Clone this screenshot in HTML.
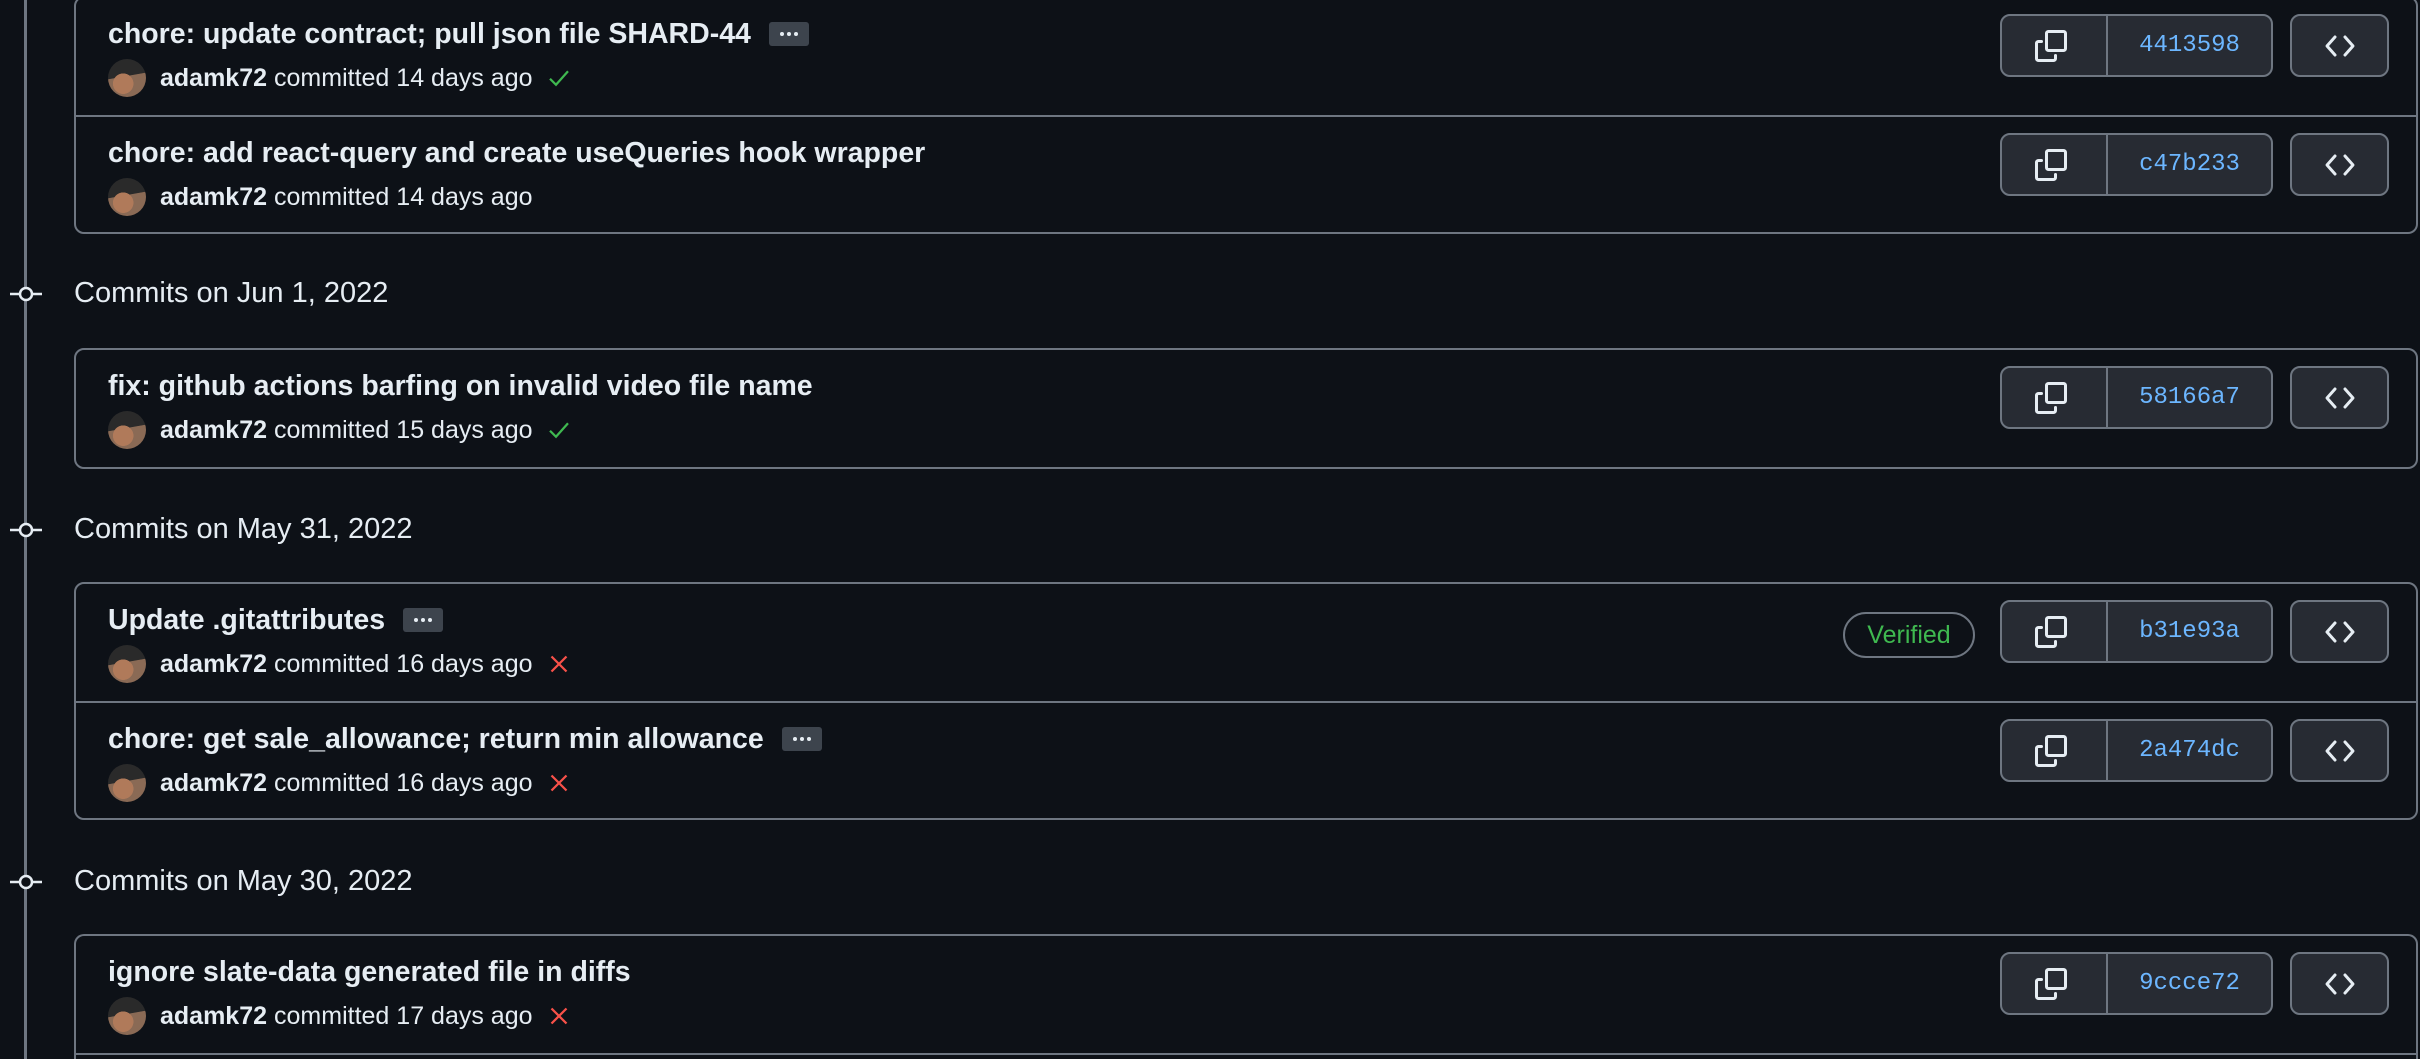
<!DOCTYPE html>
<html><head><meta charset="utf-8"><style>
*{box-sizing:border-box;margin:0;padding:0}
html,body{width:2420px;height:1059px;overflow:hidden}
body{background:#0d1117;position:relative;font-family:"Liberation Sans",Arial,sans-serif;color:#e6edf3}
.tl{position:absolute;left:24px;top:0;width:3px;height:1059px;background:#6e7681}
.date{position:absolute;left:0;height:40px;width:700px}
.date svg{position:absolute;left:8px;top:8px}
.date span{position:absolute;left:74px;top:3px;font-size:29px;color:#e6edf3}
.box{position:absolute;left:74px;width:2344px;border:2px solid #6e7681;border-radius:10px;background:#0d1117}
.row{position:relative;height:117px;border-top:2px solid #6e7681}
.row:first-child{border-top:none}
.title{position:absolute;left:32px;top:19px;font-size:28.5px;font-weight:bold;white-space:nowrap;display:flex;align-items:center;height:34px}
.ell{display:inline-flex;align-items:center;justify-content:center;width:40px;height:24px;background:#3d444d;border-radius:3px;margin-left:18px}
.ell i{display:block;width:4px;height:4px;border-radius:50%;background:#e6edf3;margin:0 1.5px}
.meta{position:absolute;left:32px;top:61px;font-size:25px;display:flex;align-items:center;white-space:nowrap;height:38px}
.av{width:38px;height:38px;border-radius:50%;margin-right:14px;background:radial-gradient(circle at 40% 65%,#b07a5a 0 30%,transparent 31%),linear-gradient(170deg,#2a2a2a 0 45%,#8a6a55 46% 100%)}
.meta b{margin-right:7px}
.st{margin-left:14px}
.grp{position:absolute;left:1924px;top:16px;width:273px;height:63px;border:2px solid #6e7681;border-radius:10px;background:#272b33;display:flex}
.grp .cp{width:106px;border-right:2px solid #6e7681;display:flex;align-items:center;justify-content:center;padding-right:6px}
.grp .sha{flex:1;display:flex;align-items:center;justify-content:center;font-family:"Liberation Mono",monospace;font-size:24px;color:#6cb6ff}
.code{position:absolute;left:2214px;top:16px;width:99px;height:63px;border:2px solid #6e7681;border-radius:10px;background:#272b33;display:flex;align-items:center;justify-content:center}
.ver{position:absolute;left:1767px;top:28px;width:132px;height:46px;border:2px solid #6e7681;border-radius:23px;color:#3fb950;font-size:25px;display:flex;align-items:center;justify-content:center}
</style></head><body>
<div class="tl"></div>

<svg width="0" height="0" style="position:absolute"><defs>
<symbol id="copy" viewBox="0 0 16 16"><path fill="#e6edf3" d="M0 6.75C0 5.784.784 5 1.750 5h1.5a.75.75 0 010 1.5h-1.5a.25.25 0 00-.25.25v7.5c0 .138.112.25.25.25h7.5a.25.25 0 00.25-.25v-1.5a.75.75 0 011.5 0v1.5A1.75 1.75 0 019.25 16h-7.5A1.75 1.75 0 010 14.25v-7.5z"/><path fill="#e6edf3" d="M5 1.75C5 .784 5.784 0 6.75 0h7.5C15.216 0 16 .784 16 1.75v7.5A1.75 1.75 0 0114.25 11h-7.5A1.75 1.75 0 015 9.25v-7.5zm1.75-.25a.25.25 0 00-.25.25v7.5c0 .138.112.25.25.25h7.5a.25.25 0 00.25-.25v-7.5a.25.25 0 00-.25-.25h-7.5z"/></symbol>
<symbol id="code" viewBox="0 0 16 16"><path fill="none" stroke="#e6edf3" stroke-width="1.5" stroke-linecap="round" stroke-linejoin="round" d="M5.5 3.5L1.5 8l4 4.5M10.5 3.5l4 4.5-4 4.5"/></symbol>
</defs></svg>

<div class="box" style="top:-4px">
 <div class="row">
  <div class="title">chore: update contract; pull json file SHARD-44<span class="ell"><i></i><i></i><i></i></span></div>
  <div class="meta"><div class="av"></div><b>adamk72</b>committed 14 days ago<svg class="st" width="24" height="24" viewBox="0 0 16 16"><path d="M2 8.5l4 4 8-9" fill="none" stroke="#3fb950" stroke-width="1.5"/></svg></div>
  <div class="grp"><div class="cp"><svg width="32" height="32"><use href="#copy"/></svg></div><div class="sha">4413598</div></div>
  <div class="code"><svg width="32" height="32"><use href="#code"/></svg></div>
 </div>
 <div class="row">
  <div class="title">chore: add react-query and create useQueries hook wrapper</div>
  <div class="meta"><div class="av"></div><b>adamk72</b>committed 14 days ago</div>
  <div class="grp"><div class="cp"><svg width="32" height="32"><use href="#copy"/></svg></div><div class="sha">c47b233</div></div>
  <div class="code"><svg width="32" height="32"><use href="#code"/></svg></div>
 </div>
</div>

<div class="date" style="top:274px"><svg width="36" height="24" viewBox="0 0 36 24"><line x1="2" y1="12" x2="34" y2="12" stroke="#e6edf3" stroke-width="2.5"/><circle cx="18" cy="12" r="6" fill="#0d1117" stroke="#e6edf3" stroke-width="2.5"/></svg><span>Commits on Jun 1, 2022</span></div>

<div class="box" style="top:348px">
 <div class="row">
  <div class="title">fix: github actions barfing on invalid video file name</div>
  <div class="meta"><div class="av"></div><b>adamk72</b>committed 15 days ago<svg class="st" width="24" height="24" viewBox="0 0 16 16"><path d="M2 8.5l4 4 8-9" fill="none" stroke="#3fb950" stroke-width="1.5"/></svg></div>
  <div class="grp"><div class="cp"><svg width="32" height="32"><use href="#copy"/></svg></div><div class="sha">58166a7</div></div>
  <div class="code"><svg width="32" height="32"><use href="#code"/></svg></div>
 </div>
</div>

<div class="date" style="top:510px"><svg width="36" height="24" viewBox="0 0 36 24"><line x1="2" y1="12" x2="34" y2="12" stroke="#e6edf3" stroke-width="2.5"/><circle cx="18" cy="12" r="6" fill="#0d1117" stroke="#e6edf3" stroke-width="2.5"/></svg><span>Commits on May 31, 2022</span></div>

<div class="box" style="top:582px">
 <div class="row">
  <div class="title">Update .gitattributes<span class="ell"><i></i><i></i><i></i></span></div>
  <div class="meta"><div class="av"></div><b>adamk72</b>committed 16 days ago<svg class="st" width="24" height="24" viewBox="0 0 16 16"><path d="M3 3l10 10M13 3L3 13" fill="none" stroke="#f85149" stroke-width="1.5"/></svg></div>
  <div class="ver">Verified</div>
  <div class="grp"><div class="cp"><svg width="32" height="32"><use href="#copy"/></svg></div><div class="sha">b31e93a</div></div>
  <div class="code"><svg width="32" height="32"><use href="#code"/></svg></div>
 </div>
 <div class="row">
  <div class="title">chore: get sale_allowance; return min allowance<span class="ell"><i></i><i></i><i></i></span></div>
  <div class="meta"><div class="av"></div><b>adamk72</b>committed 16 days ago<svg class="st" width="24" height="24" viewBox="0 0 16 16"><path d="M3 3l10 10M13 3L3 13" fill="none" stroke="#f85149" stroke-width="1.5"/></svg></div>
  <div class="grp"><div class="cp"><svg width="32" height="32"><use href="#copy"/></svg></div><div class="sha">2a474dc</div></div>
  <div class="code"><svg width="32" height="32"><use href="#code"/></svg></div>
 </div>
</div>

<div class="date" style="top:862px"><svg width="36" height="24" viewBox="0 0 36 24"><line x1="2" y1="12" x2="34" y2="12" stroke="#e6edf3" stroke-width="2.5"/><circle cx="18" cy="12" r="6" fill="#0d1117" stroke="#e6edf3" stroke-width="2.5"/></svg><span>Commits on May 30, 2022</span></div>

<div class="box" style="top:934px;height:125px;border-bottom:none;border-radius:10px 10px 0 0">
 <div class="row">
  <div class="title">ignore slate-data generated file in diffs</div>
  <div class="meta"><div class="av"></div><b>adamk72</b>committed 17 days ago<svg class="st" width="24" height="24" viewBox="0 0 16 16"><path d="M3 3l10 10M13 3L3 13" fill="none" stroke="#f85149" stroke-width="1.5"/></svg></div>
  <div class="grp"><div class="cp"><svg width="32" height="32"><use href="#copy"/></svg></div><div class="sha">9ccce72</div></div>
  <div class="code"><svg width="32" height="32"><use href="#code"/></svg></div>
 </div>
 <div class="row" style="height:6px"></div>
</div>
</body></html>
